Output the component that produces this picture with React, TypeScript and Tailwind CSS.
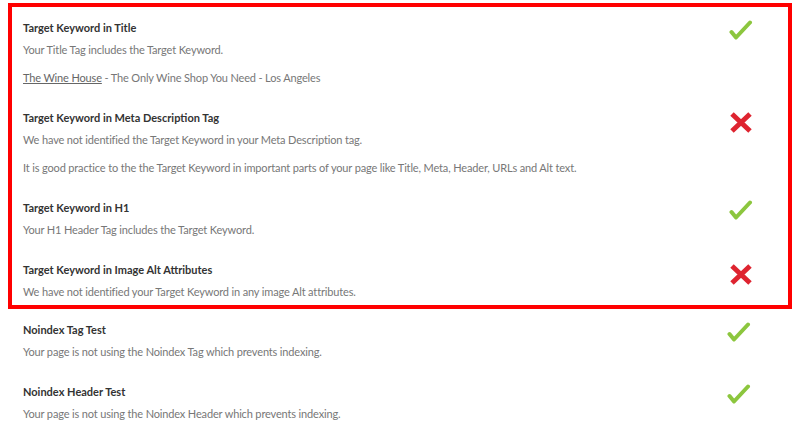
import type { ReactNode } from "react";

type Status = "pass" | "fail";

function CheckIcon() {
  return (
    <svg width="24" height="20" viewBox="0 0 24 20" className="block">
      <path d="M2.5 12 L7 17.5 L21 2.5" fill="none" stroke="#8cc63e" strokeWidth="4" strokeLinecap="round" strokeLinejoin="round" />
    </svg>
  );
}

function CrossIcon() {
  return (
    <svg width="24" height="22" viewBox="0 0 24 22" className="block mt-[2px]">
      <path d="M3 2 L21 19 M21 2 L3 19" fill="none" stroke="#de2430" strokeWidth="5" />
    </svg>
  );
}

function Row({
  title,
  status,
  children,
  className = "",
}: {
  title: string;
  status: Status;
  children: ReactNode;
  className?: string;
}) {
  return (
    <div className={`flex items-start ${className}`}>
      <div className="flex-1 min-w-0">
        <div className="text-[11px] leading-4 font-bold text-[#333]">{title}</div>
        <div className="mt-[6px] space-y-[12px] text-[11px] leading-4 tracking-[-0.15px] text-[#777]">{children}</div>
      </div>
      <div className="w-6 shrink-0">{status === "pass" ? <CheckIcon /> : <CrossIcon />}</div>
    </div>
  );
}

export default function App() {
  return (
    <div className="w-[800px] h-[440px] bg-white px-[8px] pt-[3px] overflow-hidden" style={{ fontFamily: 'Lato, "Open Sans", sans-serif' }}>
      <div className="border-4 border-[#ff0000] pt-px">
        <Row title="Target Keyword in Title" status="pass" className="pl-[11px] pr-[35px] py-[12px]">
          <p>Your Title Tag includes the Target Keyword.</p>
          <p>
            <span className="underline text-[#666]">The Wine House</span> - The Only Wine Shop You Need - Los Angeles
          </p>
        </Row>
        <Row title="Target Keyword in Meta Description Tag" status="fail" className="pl-[11px] pr-[35px] py-[12px]">
          <p>We have not identified the Target Keyword in your Meta Description tag.</p>
          <p>It is good practice to the the Target Keyword in important parts of your page like Title, Meta, Header, URLs and Alt text.</p>
        </Row>
        <Row title="Target Keyword in H1" status="pass" className="pl-[11px] pr-[35px] py-[12px]">
          <p>Your H1 Header Tag includes the Target Keyword.</p>
        </Row>
        <Row title="Target Keyword in Image Alt Attributes" status="fail" className="pl-[11px] pr-[35px] pt-[12px] pb-[5px]">
          <p>We have not identified your Target Keyword in any image Alt attributes.</p>
        </Row>
      </div>
      <Row title="Noindex Tag Test" status="pass" className="pl-[15px] pr-[41px] pt-[13px] pb-[12px]">
        <p>Your page is not using the Noindex Tag which prevents indexing.</p>
      </Row>
      <Row title="Noindex Header Test" status="pass" className="pl-[15px] pr-[41px] py-[12px]">
        <p>Your page is not using the Noindex Header which prevents indexing.</p>
      </Row>
    </div>
  );
}
